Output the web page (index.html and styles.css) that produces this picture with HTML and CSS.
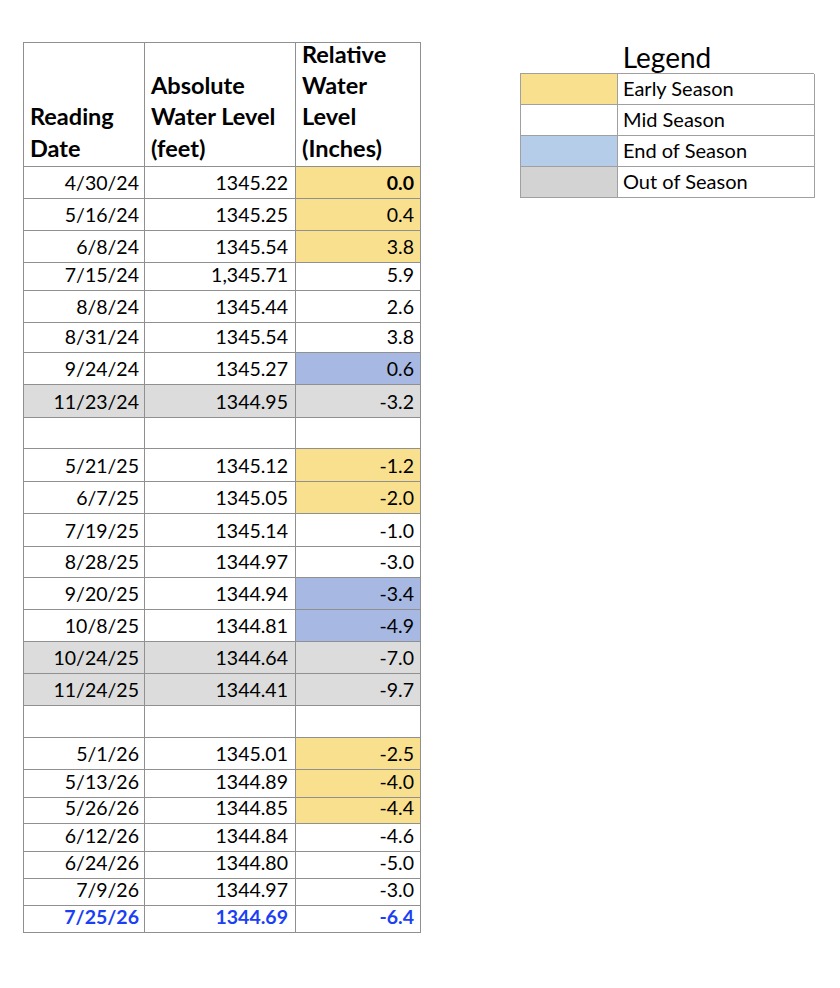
FILE: index.html
```html
<!DOCTYPE html>
<html>
<head>
<meta charset="utf-8">
<link rel="stylesheet" href="styles.css">
</head>
<body>
<div class="page">
  <div class="sheet">
    <div class="c h c1">Reading<br>Date</div>
    <div class="c h c2">Absolute<br>Water Level<br>(feet)</div>
    <div class="c h c3">Relative<br>Water<br>Level<br>(Inches)</div>

    <div class="c c1">4/30/24</div><div class="c c2">1345.22</div><div class="c c3 early b">0.0</div>
    <div class="c c1">5/16/24</div><div class="c c2">1345.25</div><div class="c c3 early">0.4</div>
    <div class="c c1">6/8/24</div><div class="c c2">1345.54</div><div class="c c3 early">3.8</div>
    <div class="c c1">7/15/24</div><div class="c c2">1,345.71</div><div class="c c3">5.9</div>
    <div class="c c1">8/8/24</div><div class="c c2">1345.44</div><div class="c c3">2.6</div>
    <div class="c c1">8/31/24</div><div class="c c2">1345.54</div><div class="c c3">3.8</div>
    <div class="c c1">9/24/24</div><div class="c c2">1345.27</div><div class="c c3 end">0.6</div>
    <div class="c c1 out">11/23/24</div><div class="c c2 out">1344.95</div><div class="c c3 out">-3.2</div>
    <div class="c c1"></div><div class="c c2"></div><div class="c c3"></div>

    <div class="c c1">5/21/25</div><div class="c c2">1345.12</div><div class="c c3 early">-1.2</div>
    <div class="c c1">6/7/25</div><div class="c c2">1345.05</div><div class="c c3 early">-2.0</div>
    <div class="c c1">7/19/25</div><div class="c c2">1345.14</div><div class="c c3">-1.0</div>
    <div class="c c1">8/28/25</div><div class="c c2">1344.97</div><div class="c c3">-3.0</div>
    <div class="c c1">9/20/25</div><div class="c c2">1344.94</div><div class="c c3 end">-3.4</div>
    <div class="c c1">10/8/25</div><div class="c c2">1344.81</div><div class="c c3 end">-4.9</div>
    <div class="c c1 out">10/24/25</div><div class="c c2 out">1344.64</div><div class="c c3 out">-7.0</div>
    <div class="c c1 out">11/24/25</div><div class="c c2 out">1344.41</div><div class="c c3 out">-9.7</div>
    <div class="c c1"></div><div class="c c2"></div><div class="c c3"></div>

    <div class="c c1">5/1/26</div><div class="c c2">1345.01</div><div class="c c3 early">-2.5</div>
    <div class="c c1">5/13/26</div><div class="c c2">1344.89</div><div class="c c3 early">-4.0</div>
    <div class="c c1">5/26/26</div><div class="c c2">1344.85</div><div class="c c3 early">-4.4</div>
    <div class="c c1">6/12/26</div><div class="c c2">1344.84</div><div class="c c3">-4.6</div>
    <div class="c c1">6/24/26</div><div class="c c2">1344.80</div><div class="c c3">-5.0</div>
    <div class="c c1">7/9/26</div><div class="c c2">1344.97</div><div class="c c3">-3.0</div>
    <div class="c c1 hl">7/25/26</div><div class="c c2 hl">1344.69</div><div class="c c3 hl">-6.4</div>
  </div>

  <div class="legend">
    <div class="legend-title">Legend</div>
    <div class="legend-grid">
      <div class="sw sw-early"></div><div class="lbl">Early Season</div>
      <div class="sw"></div><div class="lbl">Mid Season</div>
      <div class="sw sw-end"></div><div class="lbl">End of Season</div>
      <div class="sw sw-out"></div><div class="lbl">Out of Season</div>
    </div>
  </div>
</div>
</body>
</html>
```

FILE: styles.css
```css
html, body {
  margin: 0;
  padding: 0;
  background: #ffffff;
}

body {
  font-family: Lato, "Open Sans", "Liberation Sans", sans-serif;
  color: #000000;
}

.page {
  display: flex;
  align-items: flex-start;
  gap: 99px;
  padding: 42px 0 0 23px;
}

.sheet {
  display: grid;
  grid-template-columns: 121px 151px 125px;
  grid-template-rows: 124px 32px 32px 32px 28px 32px 30px 32px 33px 31px 33px 32px 33px 31px 32px 32px 32px 32px 32px 32px 28px 26px 28px 27px 27px 27px;
  border-top: 1px solid #909090;
  border-left: 1px solid #909090;
}

.c {
  box-sizing: border-box;
  border-right: 1px solid #909090;
  border-bottom: 1px solid #909090;
  display: flex;
  align-items: flex-end;
  justify-content: flex-end;
  font-size: 19.5px;
  line-height: 23px;
  padding-bottom: 4px;
  white-space: nowrap;
}

.c1 { padding-right: 5px; }
.c2 { padding-right: 7px; }
.c3 { padding-right: 6px; }

.h {
  justify-content: flex-start;
  text-align: left;
  font-weight: bold;
  font-size: 23.5px;
  line-height: 31.3px;
  padding: 0 0 2px 6px;
}

.early { background: #f9e08f; }
.end { background: #a7b9e2; }
.out { background: #dcdcdc; }
.b { font-weight: bold; }

.hl {
  color: #1b3ff5;
  font-weight: bold;
}

.legend {
  display: flex;
  flex-direction: column;
  width: 294px;
}

.legend-title {
  height: 31px;
  font-size: 28px;
  line-height: 31px;
  text-align: center;
}

.legend-grid {
  display: grid;
  grid-template-columns: 97px 197px;
  grid-auto-rows: 31px;
  border-top: 1px solid #a0a0a0;
  border-left: 1px solid #a0a0a0;
}

.sw, .lbl {
  box-sizing: border-box;
  border-right: 1px solid #a0a0a0;
  border-bottom: 1px solid #a0a0a0;
}

.sw-early { background: #f9e08f; }
.sw-end { background: #b5cde8; }
.sw-out { background: #d3d3d3; }

.lbl {
  display: flex;
  align-items: flex-end;
  padding: 0 0 5px 5px;
  font-size: 20px;
  line-height: 22px;
}
```
